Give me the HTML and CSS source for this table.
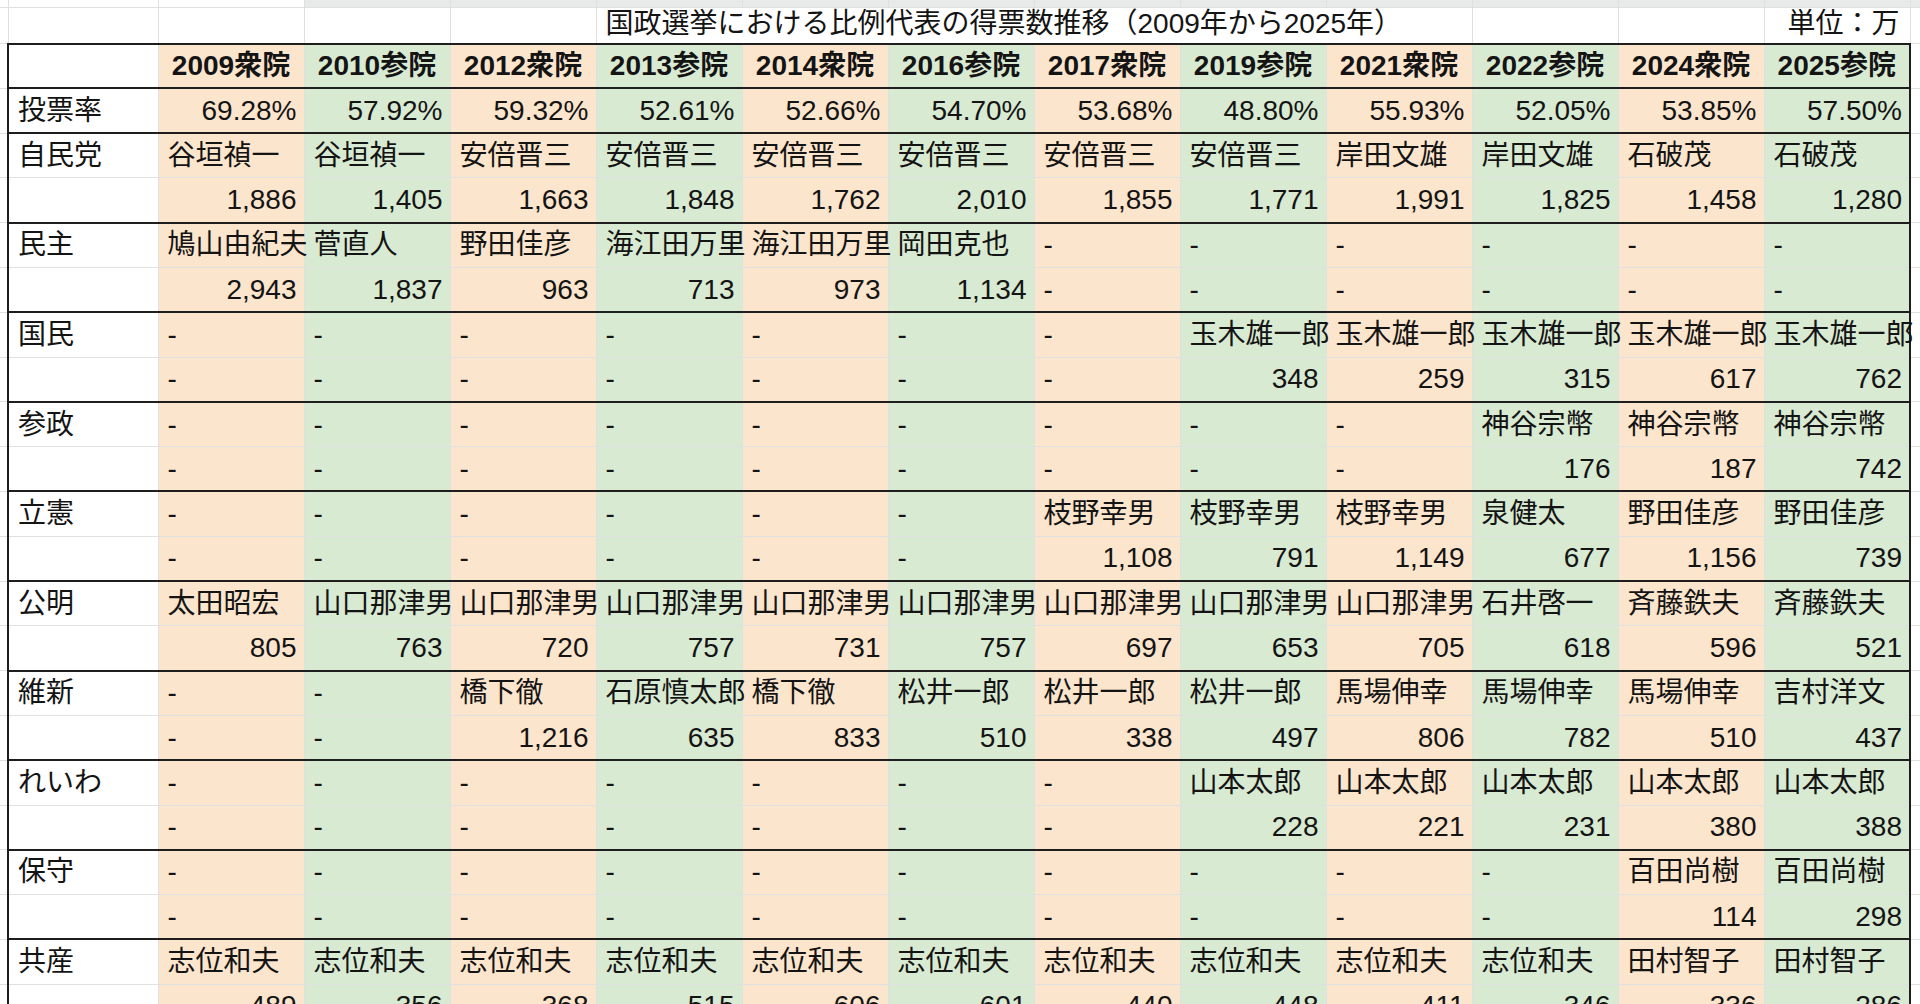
FILE: index.html
```html
<!DOCTYPE html>
<html lang="ja">
<head>
<meta charset="utf-8">
<title>国政選挙における比例代表の得票数推移</title>
<link rel="stylesheet" href="styles.css">
</head>
<body>
<table class="sheet">
<colgroup><col class="cg"><col class="c0"><col class="cd" span="12"><col class="cg2"></colgroup>
<tbody>
<tr class="strip"><td class="g"></td><td></td><td></td><td class="s"></td><td class="s"></td><td class="s"></td><td class="s"></td><td class="s"></td><td class="s"></td><td class="s"></td><td class="s"></td><td class="s"></td><td class="s"></td><td class="s"></td><td class="g s"></td></tr>
<tr class="title"><td class="g"></td><td></td><td></td><td></td><td></td><td class="ttl" colspan="6">国政選挙における比例代表の得票数推移（2009年から2025年）</td><td></td><td></td><td class="unit">単位：万</td><td class="g"></td></tr>
<tr class="t hd"><td class="g"></td><td></td><td>2009衆院</td><td>2010参院</td><td>2012衆院</td><td>2013参院</td><td>2014衆院</td><td>2016参院</td><td>2017衆院</td><td>2019参院</td><td>2021衆院</td><td>2022参院</td><td>2024衆院</td><td>2025参院</td><td class="g"></td></tr>
<tr class="t num end"><td class="g"></td><td class="d">投票率</td><td>69.28%</td><td>57.92%</td><td>59.32%</td><td>52.61%</td><td>52.66%</td><td>54.70%</td><td>53.68%</td><td>48.80%</td><td>55.93%</td><td>52.05%</td><td>53.85%</td><td>57.50%</td><td class="g"></td></tr>

<tr class="t"><td class="g"></td><td>自民党</td><td>谷垣禎一</td><td>谷垣禎一</td><td>安倍晋三</td><td>安倍晋三</td><td>安倍晋三</td><td>安倍晋三</td><td>安倍晋三</td><td>安倍晋三</td><td>岸田文雄</td><td>岸田文雄</td><td>石破茂</td><td>石破茂</td><td class="g"></td></tr>
<tr class="t num end"><td class="g"></td><td></td><td>1,886</td><td>1,405</td><td>1,663</td><td>1,848</td><td>1,762</td><td>2,010</td><td>1,855</td><td>1,771</td><td>1,991</td><td>1,825</td><td>1,458</td><td>1,280</td><td class="g"></td></tr>

<tr class="t"><td class="g"></td><td>民主</td><td>鳩山由紀夫</td><td>菅直人</td><td>野田佳彦</td><td>海江田万里</td><td>海江田万里</td><td>岡田克也</td><td>-</td><td>-</td><td>-</td><td>-</td><td>-</td><td>-</td><td class="g"></td></tr>
<tr class="t num end"><td class="g"></td><td></td><td>2,943</td><td>1,837</td><td>963</td><td>713</td><td>973</td><td>1,134</td><td class="d">-</td><td class="d">-</td><td class="d">-</td><td class="d">-</td><td class="d">-</td><td class="d">-</td><td class="g"></td></tr>

<tr class="t"><td class="g"></td><td>国民</td><td>-</td><td>-</td><td>-</td><td>-</td><td>-</td><td>-</td><td>-</td><td>玉木雄一郎</td><td>玉木雄一郎</td><td>玉木雄一郎</td><td>玉木雄一郎</td><td>玉木雄一郎</td><td class="g"></td></tr>
<tr class="t num end"><td class="g"></td><td></td><td class="d">-</td><td class="d">-</td><td class="d">-</td><td class="d">-</td><td class="d">-</td><td class="d">-</td><td class="d">-</td><td>348</td><td>259</td><td>315</td><td>617</td><td>762</td><td class="g"></td></tr>

<tr class="t"><td class="g"></td><td>参政</td><td>-</td><td>-</td><td>-</td><td>-</td><td>-</td><td>-</td><td>-</td><td>-</td><td>-</td><td>神谷宗幣</td><td>神谷宗幣</td><td>神谷宗幣</td><td class="g"></td></tr>
<tr class="t num end"><td class="g"></td><td></td><td class="d">-</td><td class="d">-</td><td class="d">-</td><td class="d">-</td><td class="d">-</td><td class="d">-</td><td class="d">-</td><td class="d">-</td><td class="d">-</td><td>176</td><td>187</td><td>742</td><td class="g"></td></tr>

<tr class="t"><td class="g"></td><td>立憲</td><td>-</td><td>-</td><td>-</td><td>-</td><td>-</td><td>-</td><td>枝野幸男</td><td>枝野幸男</td><td>枝野幸男</td><td>泉健太</td><td>野田佳彦</td><td>野田佳彦</td><td class="g"></td></tr>
<tr class="t num end"><td class="g"></td><td></td><td class="d">-</td><td class="d">-</td><td class="d">-</td><td class="d">-</td><td class="d">-</td><td class="d">-</td><td>1,108</td><td>791</td><td>1,149</td><td>677</td><td>1,156</td><td>739</td><td class="g"></td></tr>

<tr class="t"><td class="g"></td><td>公明</td><td>太田昭宏</td><td>山口那津男</td><td>山口那津男</td><td>山口那津男</td><td>山口那津男</td><td>山口那津男</td><td>山口那津男</td><td>山口那津男</td><td>山口那津男</td><td>石井啓一</td><td>斉藤鉄夫</td><td>斉藤鉄夫</td><td class="g"></td></tr>
<tr class="t num end"><td class="g"></td><td></td><td>805</td><td>763</td><td>720</td><td>757</td><td>731</td><td>757</td><td>697</td><td>653</td><td>705</td><td>618</td><td>596</td><td>521</td><td class="g"></td></tr>

<tr class="t"><td class="g"></td><td>維新</td><td>-</td><td>-</td><td>橋下徹</td><td>石原慎太郎</td><td>橋下徹</td><td>松井一郎</td><td>松井一郎</td><td>松井一郎</td><td>馬場伸幸</td><td>馬場伸幸</td><td>馬場伸幸</td><td>吉村洋文</td><td class="g"></td></tr>
<tr class="t num end"><td class="g"></td><td></td><td class="d">-</td><td class="d">-</td><td>1,216</td><td>635</td><td>833</td><td>510</td><td>338</td><td>497</td><td>806</td><td>782</td><td>510</td><td>437</td><td class="g"></td></tr>

<tr class="t"><td class="g"></td><td>れいわ</td><td>-</td><td>-</td><td>-</td><td>-</td><td>-</td><td>-</td><td>-</td><td>山本太郎</td><td>山本太郎</td><td>山本太郎</td><td>山本太郎</td><td>山本太郎</td><td class="g"></td></tr>
<tr class="t num end"><td class="g"></td><td></td><td class="d">-</td><td class="d">-</td><td class="d">-</td><td class="d">-</td><td class="d">-</td><td class="d">-</td><td class="d">-</td><td>228</td><td>221</td><td>231</td><td>380</td><td>388</td><td class="g"></td></tr>

<tr class="t"><td class="g"></td><td>保守</td><td>-</td><td>-</td><td>-</td><td>-</td><td>-</td><td>-</td><td>-</td><td>-</td><td>-</td><td>-</td><td>百田尚樹</td><td>百田尚樹</td><td class="g"></td></tr>
<tr class="t num end"><td class="g"></td><td></td><td class="d">-</td><td class="d">-</td><td class="d">-</td><td class="d">-</td><td class="d">-</td><td class="d">-</td><td class="d">-</td><td class="d">-</td><td class="d">-</td><td class="d">-</td><td>114</td><td>298</td><td class="g"></td></tr>

<tr class="t"><td class="g"></td><td>共産</td><td>志位和夫</td><td>志位和夫</td><td>志位和夫</td><td>志位和夫</td><td>志位和夫</td><td>志位和夫</td><td>志位和夫</td><td>志位和夫</td><td>志位和夫</td><td>志位和夫</td><td>田村智子</td><td>田村智子</td><td class="g"></td></tr>
<tr class="t num end"><td class="g"></td><td></td><td>489</td><td>356</td><td>368</td><td>515</td><td>606</td><td>601</td><td>440</td><td>448</td><td>411</td><td>346</td><td>336</td><td>286</td><td class="g"></td></tr>
</tbody>
</table>
</body>
</html>
```

FILE: styles.css
```css
html, body {
  margin: 0;
  padding: 0;
  background: #ffffff;
}

body {
  width: 1920px;
  height: 1004px;
  overflow: hidden;
  font-family: "Liberation Sans", Arial, "Noto Sans CJK JP", sans-serif;
  font-size: 28px;
  color: #141414;
}

.sheet {
  border-collapse: collapse;
  table-layout: fixed;
  width: 1920px;
}

.cg { width: 8px; }
.c0 { width: 150px; }
.cd { width: 146px; }
.cg2 { width: 10px; }

.sheet td {
  padding: 0 7px 0 9px;
  white-space: nowrap;
  overflow: visible;
  line-height: 32px;
  vertical-align: middle;
  text-align: left;
  border: 1px solid #dfe1e0;
}

.sheet td.g {
  padding: 0;
}

.sheet tr td:first-child { border-left: none; }
.sheet tr td:last-child { border-right: none; }

.strip { height: 7px; }
.strip td { border-top: none; }
.strip td.s { background: #e7eae8; }

.title { height: 36px; }
.title td { vertical-align: middle; padding-bottom: 3px; }
.title td.ttl { padding-left: 9px; }
.title td.unit { text-align: right; padding-right: 10px; }

.t { height: 44.8px; }

.t td:nth-child(2n+3):not(.g) { background: #fce5cd; }
.t td:nth-child(2n+4):not(.g) { background: #d9ead3; }

.t td:nth-child(2) { border-left: 2px solid #1e1e1e; }
.t td:nth-child(14) { border-right: 2px solid #1e1e1e; }

.hd td:not(.g) {
  border-top: 2px solid #1e1e1e;
  border-bottom: 2px solid #1e1e1e;
  font-weight: bold;
  text-align: center;
  padding: 0 4px;
}

.end td:not(.g) {
  border-bottom: 2px solid #1e1e1e;
}

.num td { text-align: right; }
.num td.d { text-align: left; }
```
